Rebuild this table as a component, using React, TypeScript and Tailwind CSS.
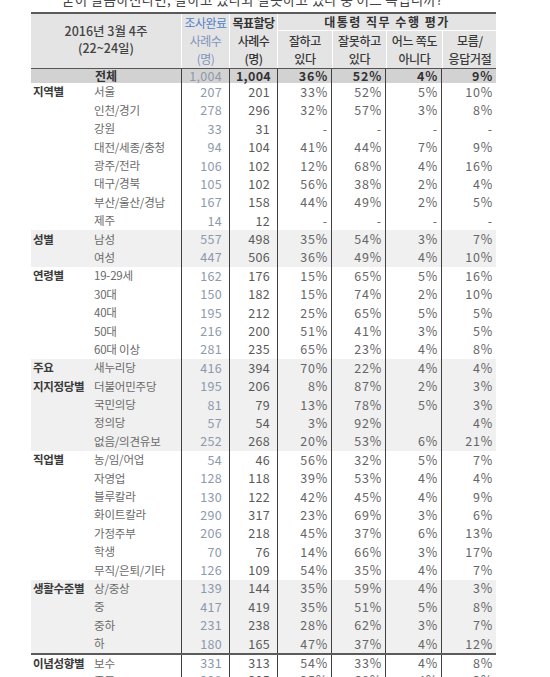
import React from "react";

type Row = {
  group?: string;
  label: string;
  n: string;
  q: string;
  good: string;
  bad: string;
  neither: string;
  dk: string;
};

type Group = { band: boolean; sep?: boolean; rows: Row[] };

const groups: Group[] = [
  {
    band: false,
    rows: [
      { group: "지역별", label: "서울", n: "207", q: "201", good: "33%", bad: "52%", neither: "5%", dk: "10%" },
      { label: "인천/경기", n: "278", q: "296", good: "32%", bad: "57%", neither: "3%", dk: "8%" },
      { label: "강원", n: "33", q: "31", good: "-", bad: "-", neither: "-", dk: "-" },
      { label: "대전/세종/충청", n: "94", q: "104", good: "41%", bad: "44%", neither: "7%", dk: "9%" },
      { label: "광주/전라", n: "106", q: "102", good: "12%", bad: "68%", neither: "4%", dk: "16%" },
      { label: "대구/경북", n: "105", q: "102", good: "56%", bad: "38%", neither: "2%", dk: "4%" },
      { label: "부산/울산/경남", n: "167", q: "158", good: "44%", bad: "49%", neither: "2%", dk: "5%" },
      { label: "제주", n: "14", q: "12", good: "-", bad: "-", neither: "-", dk: "-" },
    ],
  },
  {
    band: true,
    rows: [
      { group: "성별", label: "남성", n: "557", q: "498", good: "35%", bad: "54%", neither: "3%", dk: "7%" },
      { label: "여성", n: "447", q: "506", good: "36%", bad: "49%", neither: "4%", dk: "10%" },
    ],
  },
  {
    band: false,
    rows: [
      { group: "연령별", label: "19-29세", n: "162", q: "176", good: "15%", bad: "65%", neither: "5%", dk: "16%" },
      { label: "30대", n: "150", q: "182", good: "15%", bad: "74%", neither: "2%", dk: "10%" },
      { label: "40대", n: "195", q: "212", good: "25%", bad: "65%", neither: "5%", dk: "5%" },
      { label: "50대", n: "216", q: "200", good: "51%", bad: "41%", neither: "3%", dk: "5%" },
      { label: "60대 이상", n: "281", q: "235", good: "65%", bad: "23%", neither: "4%", dk: "8%" },
    ],
  },
  {
    band: true,
    rows: [
      { group: "주요", label: "새누리당", n: "416", q: "394", good: "70%", bad: "22%", neither: "4%", dk: "4%" },
      { group: "지지정당별", label: "더불어민주당", n: "195", q: "206", good: "8%", bad: "87%", neither: "2%", dk: "3%" },
      { label: "국민의당", n: "81", q: "79", good: "13%", bad: "78%", neither: "5%", dk: "3%" },
      { label: "정의당", n: "57", q: "54", good: "3%", bad: "92%", neither: "", dk: "4%" },
      { label: "없음/의견유보", n: "252", q: "268", good: "20%", bad: "53%", neither: "6%", dk: "21%" },
    ],
  },
  {
    band: false,
    rows: [
      { group: "직업별", label: "농/임/어업", n: "54", q: "46", good: "56%", bad: "32%", neither: "5%", dk: "7%" },
      { label: "자영업", n: "128", q: "118", good: "39%", bad: "53%", neither: "4%", dk: "4%" },
      { label: "블루칼라", n: "130", q: "122", good: "42%", bad: "45%", neither: "4%", dk: "9%" },
      { label: "화이트칼라", n: "290", q: "317", good: "23%", bad: "69%", neither: "3%", dk: "6%" },
      { label: "가정주부", n: "206", q: "218", good: "45%", bad: "37%", neither: "6%", dk: "13%" },
      { label: "학생", n: "70", q: "76", good: "14%", bad: "66%", neither: "3%", dk: "17%" },
      { label: "무직/은퇴/기타", n: "126", q: "109", good: "54%", bad: "35%", neither: "4%", dk: "7%" },
    ],
  },
  {
    band: true,
    rows: [
      { group: "생활수준별", label: "상/중상", n: "139", q: "144", good: "35%", bad: "59%", neither: "4%", dk: "3%" },
      { label: "중", n: "417", q: "419", good: "35%", bad: "51%", neither: "5%", dk: "8%" },
      { label: "중하", n: "231", q: "238", good: "28%", bad: "62%", neither: "3%", dk: "7%" },
      { label: "하", n: "180", q: "165", good: "47%", bad: "37%", neither: "4%", dk: "12%" },
    ],
  },
  {
    band: false,
    sep: true,
    rows: [
      { group: "이념성향별", label: "보수", n: "331", q: "313", good: "54%", bad: "33%", neither: "4%", dk: "8%" },
      { label: "중도", n: "298", q: "305", good: "25%", bad: "68%", neither: "4%", dk: "3%" },
    ],
  },
];

const cols = "grid grid-cols-[63px_87px_48px_48px_54px_54px_56px_55px]";

function DataRow({ r, band, sep }: { r: Row; band: boolean; sep: boolean }) {
  return (
    <div
      className={`${cols} h-[18.4px] ${band ? "bg-[#f0f0f0]" : "bg-white"} ${
        sep ? "border-t-2 border-[#5b5b5b]" : ""
      }`}
    >
      <div className="flex items-center pl-[2px] text-[11.5px] font-bold tracking-[-0.3px] text-[#3a3a3a] leading-none whitespace-nowrap">
        {r.group}
      </div>
      <div className="flex items-center text-[11.5px] tracking-[-0.2px] text-[#6a6a6a] leading-none whitespace-nowrap">
        {r.label}
      </div>
      <div className="flex items-center justify-end border-l border-[#3f3f3f] pr-[7px] text-[12.5px] tracking-[0.3px] text-[#8d99ad] leading-none">
        {r.n}
      </div>
      <div className="flex items-center justify-end border-l border-[#3f3f3f] pr-[7px] text-[12.5px] tracking-[0.3px] text-[#5a5a5a] leading-none">
        {r.q}
      </div>
      {[r.good, r.bad, r.neither, r.dk].map((v, i) => (
        <div
          key={i}
          className="flex items-center justify-end border-l border-[#3f3f3f] pr-[3px] text-[12.5px] tracking-[0.8px] text-[#666] leading-none"
        >
          {v}
        </div>
      ))}
    </div>
  );
}

export default function App() {
  return (
    <div className="w-[550px] h-[677px] overflow-hidden bg-white font-[family-name:'Noto_Sans_CJK_KR','Noto_Sans',sans-serif]">
      <div className="h-[12px] overflow-hidden">
        <p className="-mt-[9px] pl-[62px] text-[13.5px] tracking-[0.3px] leading-[17px] text-[#444] whitespace-nowrap">
          굳이 말씀하신다면, 잘하고 있다와 잘못하고 있다 중 어느 쪽입니까?
        </p>
      </div>

      <div className="ml-[31px] w-[465px] border-t-2 border-[#5b5b5b]">
        {/* header */}
        <div className={`${cols} h-[54px] bg-[#e4e4e4] text-[#444]`}>
          <div className="col-span-2 flex flex-col items-center justify-center pb-[4px] text-[12.5px] leading-[17px] font-medium">
            <span>2016년 3월 4주</span>
            <span>(22~24일)</span>
          </div>
          <div className="flex flex-col items-center justify-center border-l border-white text-[12px] tracking-[-0.6px] leading-[18px]">
            <span className="text-[#4e7fc4]">조사완료</span>
            <span className="text-[#7f95bb]">사례수</span>
            <span className="text-[#7f95bb]">(명)</span>
          </div>
          <div className="flex flex-col items-center justify-center border-l border-white text-[12px] tracking-[-0.6px] leading-[18px] text-[#333]">
            <span className="font-bold">목표할당</span>
            <span className="font-medium">사례수</span>
            <span className="font-medium">(명)</span>
          </div>
          <div className="col-span-4 flex flex-col border-l border-white">
            <div className="flex h-[17px] items-center justify-center border-b border-white text-[12px] font-bold tracking-[1.5px] text-[#333]">
              대통령 직무 수행 평가
            </div>
            <div className="grid flex-1 grid-cols-[54px_54px_56px_55px] text-[12px] tracking-[-0.3px] leading-[18px] font-medium text-[#3a3a3a]">
              <div className="flex flex-col items-center justify-center">
                <span>잘하고</span>
                <span>있다</span>
              </div>
              <div className="flex flex-col items-center justify-center border-l border-white">
                <span>잘못하고</span>
                <span>있다</span>
              </div>
              <div className="flex flex-col items-center justify-center border-l border-white">
                <span>어느 쪽도</span>
                <span>아니다</span>
              </div>
              <div className="flex flex-col items-center justify-center border-l border-white">
                <span>모름/</span>
                <span>응답거절</span>
              </div>
            </div>
          </div>
        </div>

        {/* total row */}
        <div className={`${cols} h-[15px] border-t border-[#555] bg-[#d2d2d2]`}>
          <div className="col-span-2 flex items-center justify-center text-[12px] font-bold text-[#333] leading-none">
            전체
          </div>
          <div className="flex items-center justify-end border-l border-[#3f3f3f] pr-[7px] text-[12.5px] tracking-[0.3px] text-[#8d99ad] leading-none">
            1,004
          </div>
          <div className="flex items-center justify-end border-l border-[#3f3f3f] pr-[6px] text-[12.5px] tracking-[0.3px] font-bold text-[#333] leading-none">
            1,004
          </div>
          {["36%", "52%", "4%", "9%"].map((v) => (
            <div
              key={v}
              className="flex items-center justify-end border-l border-[#3f3f3f] pr-[3px] text-[12.5px] tracking-[0.8px] font-bold text-[#333] leading-none"
            >
              {v}
            </div>
          ))}
        </div>

        {groups.map((g, gi) =>
          g.rows.map((r, ri) => (
            <DataRow key={`${gi}-${ri}`} r={r} band={g.band} sep={!!g.sep && ri === 0} />
          ))
        )}
      </div>
    </div>
  );
}
